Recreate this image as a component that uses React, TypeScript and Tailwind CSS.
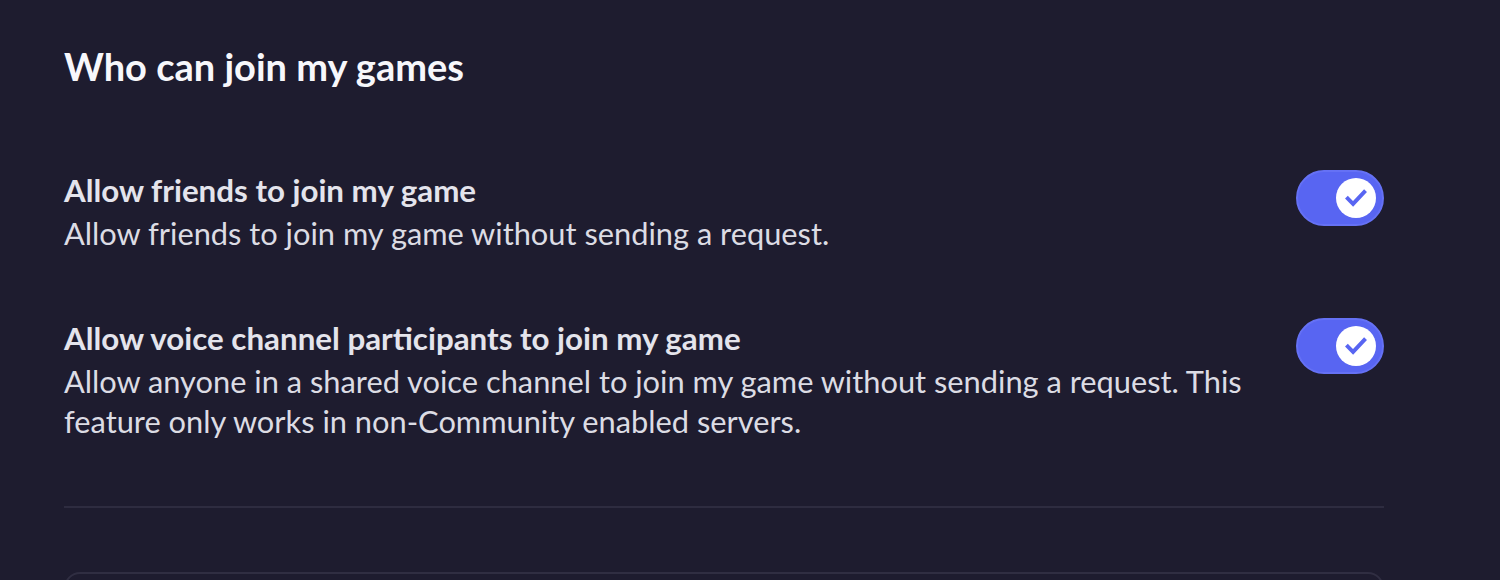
import React, { useState } from "react";

const Toggle = ({ on, onClick }: { on: boolean; onClick: () => void }) => (
  <button
    onClick={onClick}
    className={`relative flex h-[56px] w-[88px] shrink-0 items-center rounded-full border-2 px-[6px] ${
      on ? "justify-end border-[#6571f5] bg-[#5865f2]" : "justify-start border-[#6b6b78] bg-[#5c5c68]"
    }`}
  >
    <span className="flex h-[40px] w-[40px] items-center justify-center rounded-full bg-white">
      {on ? (
        <svg width="28" height="28" viewBox="0 0 24 24" fill="none">
          <path d="M5 12.5l4.5 4.5L19 7" stroke="#5865f2" strokeWidth="3.4" strokeLinecap="square" strokeLinejoin="miter" />
        </svg>
      ) : (
        <svg width="22" height="22" viewBox="0 0 24 24" fill="none">
          <path d="M6 6l12 12M18 6L6 18" stroke="#5c5c68" strokeWidth="3.4" strokeLinecap="round" />
        </svg>
      )}
    </span>
  </button>
);

const App = () => {
  const [settings, setSettings] = useState([
    {
      title: "Allow friends to join my game",
      desc: "Allow friends to join my game without sending a request.",
      on: true,
    },
    {
      title: "Allow voice channel participants to join my game",
      desc: "Allow anyone in a shared voice channel to join my game without sending a request. This feature only works in non-Community enabled servers.",
      on: true,
    },
  ]);

  const toggle = (i: number) => {
    setSettings(settings.map((s, idx) => (idx === i ? { ...s, on: !s.on } : s)));
  };

  return (
    <div className="min-h-[580px] overflow-hidden bg-[#1e1c2f] font-['Lato',sans-serif]">
      <div className="w-[1320px] pl-16 pt-[42px]" style={{ boxSizing: "content-box" }}>
        <h2 className="text-[38px] font-bold leading-[48px] text-[#f7f7fb]">Who can join my games</h2>

        <div className="mt-[80px] flex flex-col gap-[64px]">
          {settings.map((s, i) => (
            <div key={s.title} className="flex items-start justify-between gap-8">
              <div className="max-w-[1215px]">
                <div className="text-[31.3px] font-bold leading-[40px] text-[#e4e4ec]">{s.title}</div>
                <div className="mt-1 text-[30.8px] leading-[40px] text-[#dcdce4]">{s.desc}</div>
              </div>
              <Toggle on={s.on} onClick={() => toggle(i)} />
            </div>
          ))}
        </div>

        {/* Divider */}
        <div className="mt-[64px] h-[2px] bg-[#2e2c40]" />

        <div className="mt-[64px] h-[80px] rounded-2xl border-2 border-[#302e42]" />
      </div>
    </div>
  );
};

export default App;
